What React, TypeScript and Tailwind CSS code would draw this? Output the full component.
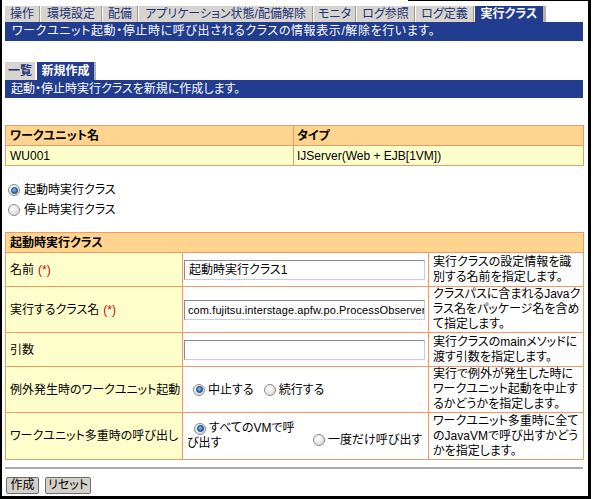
import React from "react";

const FONT =
  "font-['Liberation_Sans','Noto_Sans_CJK_JP',sans-serif] [font-feature-settings:'palt']";

function Radio({ checked }: { checked?: boolean }) {
  return (
    <span className="inline-flex w-[12px] h-[12px] shrink-0 items-center justify-center rounded-full border border-[#8e8e8e] bg-[radial-gradient(circle_at_40%_35%,#ffffff,#cfcfcf)]">
      {checked && (
        <span className="w-[7px] h-[7px] rounded-full border border-[#123a70] bg-[radial-gradient(circle_at_40%_35%,#7cc0ff,#0a52a8)]" />
      )}
    </span>
  );
}

const tabs: { t: string; w: string }[] = [
  { t: "操作", w: "w-[34px]" },
  { t: "環境設定", w: "w-[60px]" },
  { t: "配備", w: "w-[34px]" },
  { t: "アプリケーション状態/配備解除", w: "w-[173px]" },
  { t: "モニタ", w: "w-[41px]" },
  { t: "ログ参照", w: "w-[57px]" },
  { t: "ログ定義", w: "w-[57px]" },
];

function Req() {
  return <span className="text-[#d00000] ml-[4px]">(*)</span>;
}

export default function App() {
  return (
    <div className={`relative w-[593px] h-[499px] bg-white text-[12px] text-black ${FONT}`}>
      <div className="absolute top-0 left-[408px] w-[183px] h-[1px] bg-black" />
      <div className="w-[591px] h-[499px] border-l-2 border-r-[3px] border-b-[3px] border-black pl-[3px] pr-[5px] pt-[6px]">
        {/* top tabs */}
        <div className="flex h-[16px]">
          {tabs.map((tb) => (
            <React.Fragment key={tb.t}>
              <div
                className={`${tb.w} h-[16px] bg-[#d7d4cf] text-[#1d3274] leading-[16px] text-center whitespace-nowrap`}
              >
                {tb.t}
              </div>
              <div className="w-[2px] h-[16px] border-l border-[#9c9892] bg-white" />
            </React.Fragment>
          ))}
          <div className="w-[71px] h-[16px] flex">
            <div className="flex-1 bg-[#223c8f] text-white font-bold leading-[16px] text-center">
              実行クラス
            </div>
            <div className="w-[3px] bg-[#b4b2ae]" />
          </div>
        </div>
        <div className="h-[19px] bg-[#223c8f] text-white leading-[19px] pl-[7px] tracking-[0.6px] whitespace-nowrap">
          ワークユニット起動・停止時に呼び出されるクラスの情報表示/解除を行います。
        </div>

        {/* sub tabs */}
        <div className="flex h-[18px] mt-[21px]">
          <div className="w-[30px] bg-[#d7d4cf] text-[#1d3274] font-bold leading-[18px] text-center">
            一覧
          </div>
          <div className="w-[2px] bg-white" />
          <div className="w-[59px] flex">
            <div className="flex-1 bg-[#223c8f] text-white font-bold leading-[18px] text-center">
              新規作成
            </div>
            <div className="w-[2px] bg-[#b4b2ae]" />
          </div>
        </div>
        <div className="h-[18px] bg-[#223c8f] text-white leading-[18px] pl-[6px] whitespace-nowrap">
          起動・停止時実行クラスを新規に作成します。
        </div>

        {/* work unit table */}
        <table className="mt-[27px] w-[578px] table-fixed border-collapse">
          <colgroup>
            <col className="w-[288px]" />
            <col className="w-[290px]" />
          </colgroup>
          <tbody>
            <tr className="h-[20px] bg-[#ffd48f]">
              <td className="border border-[#f29a66] px-[4px] font-bold">ワークユニット名</td>
              <td className="border border-[#f29a66] px-[3px] font-bold">タイプ</td>
            </tr>
            <tr className="h-[20px] bg-[#ffffcc]">
              <td className="border border-[#f29a66] px-[4px]">WU001</td>
              <td className="border border-[#f29a66] px-[3px]">IJServer(Web + EJB[1VM])</td>
            </tr>
          </tbody>
        </table>

        {/* radios */}
        <div className="mt-[14px] flex flex-col">
          <div className="h-[20px] flex items-center pl-[3px] gap-[4px]">
            <Radio checked />
            <span>起動時実行クラス</span>
          </div>
          <div className="h-[20px] flex items-center pl-[3px] gap-[4px]">
            <Radio />
            <span>停止時実行クラス</span>
          </div>
        </div>

        {/* main table */}
        <table className="mt-[12px] w-[578px] table-fixed border-collapse">
          <colgroup>
            <col className="w-[177px]" />
            <col className="w-[246px]" />
            <col className="w-[155px]" />
          </colgroup>
          <tbody>
            <tr className="h-[20px] bg-[#ffd48f]">
              <td colSpan={3} className="border border-[#f29a66] px-[4px] font-bold">
                起動時実行クラス
              </td>
            </tr>
            <tr className="h-[34px]">
              <td className="border border-[#f29a66] bg-[#ffffcc] px-[4px]">
                名前<Req />
              </td>
              <td className="border border-[#f29a66] pl-[1px]">
                <div className="w-[241px] h-[20px] border border-t-[#8a8a8a] border-l-[#8a8a8a] border-r-[#c8cbe6] border-b-[#c8cbe6] pl-[4px] leading-[18px] whitespace-nowrap overflow-hidden">
                  起動時実行クラス1
                </div>
              </td>
              <td className="border border-[#f29a66] px-[4px] leading-[15px] whitespace-nowrap overflow-hidden">
                実行クラスの設定情報を識
                <br />
                別する名前を指定します。
              </td>
            </tr>
            <tr className="h-[45px]">
              <td className="border border-[#f29a66] bg-[#ffffcc] px-[4px]">
                実行するクラス名<Req />
              </td>
              <td className="border border-[#f29a66] pl-[1px]">
                <div className="w-[241px] h-[20px] border border-t-[#8a8a8a] border-l-[#8a8a8a] border-r-[#c8cbe6] border-b-[#c8cbe6] pl-[3px] text-[11px] tracking-[0.1px] leading-[18px] whitespace-nowrap overflow-hidden">
                  com.fujitsu.interstage.apfw.po.ProcessObserver
                </div>
              </td>
              <td className="border border-[#f29a66] px-[4px] leading-[15px] whitespace-nowrap overflow-hidden">
                クラスパスに含まれるJavaク
                <br />
                ラス名をパッケージ名を含め
                <br />
                て指定します。
              </td>
            </tr>
            <tr className="h-[34px]">
              <td className="border border-[#f29a66] bg-[#ffffcc] px-[4px]">引数</td>
              <td className="border border-[#f29a66] pl-[1px]">
                <div className="w-[241px] h-[20px] border border-t-[#8a8a8a] border-l-[#8a8a8a] border-r-[#c8cbe6] border-b-[#c8cbe6]" />
              </td>
              <td className="border border-[#f29a66] px-[4px] leading-[15px] whitespace-nowrap overflow-hidden">
                実行クラスのmainメソッドに
                <br />
                渡す引数を指定します。
              </td>
            </tr>
            <tr className="h-[45px]">
              <td className="border border-[#f29a66] bg-[#ffffcc] px-[4px] whitespace-nowrap">
                例外発生時のワークユニット起動
              </td>
              <td className="border border-[#f29a66] pl-[10px]">
                <div className="flex items-center">
                  <Radio checked />
                  <span className="ml-[3px]">中止する</span>
                  <span className="ml-[10px] flex items-center">
                    <Radio />
                    <span className="ml-[3px]">続行する</span>
                  </span>
                </div>
              </td>
              <td className="border border-[#f29a66] px-[4px] leading-[15px] whitespace-nowrap overflow-hidden">
                実行で例外が発生した時に
                <br />
                ワークユニット起動を中止す
                <br />
                るかどうかを指定します。
              </td>
            </tr>
            <tr className="h-[47px]">
              <td className="border border-[#f29a66] bg-[#ffffcc] px-[4px] whitespace-nowrap">
                ワークユニット多重時の呼び出し
              </td>
              <td className="border border-[#f29a66] pl-[4px]">
                <div className="flex items-center">
                  <div className="w-[126px] leading-[15px]">
                    <div className="flex items-center">
                      <span className="ml-[7px] mr-[3px] flex items-center">
                        <Radio checked />
                      </span>
                      <span className="whitespace-nowrap">すべてのVMで呼</span>
                    </div>
                    <div>び出す</div>
                  </div>
                  <div className="flex items-center ml-[0px] mt-[7px]">
                    <Radio />
                    <span className="ml-[3px] whitespace-nowrap">一度だけ呼び出す</span>
                  </div>
                </div>
              </td>
              <td className="border border-[#f29a66] px-[4px] leading-[15px] whitespace-nowrap overflow-hidden">
                ワークユニット多重時に全て
                <br />
                のJavaVMで呼び出すかどう
                <br />
                かを指定します。
              </td>
            </tr>
          </tbody>
        </table>

        <div className="mt-[7px] h-[2px] bg-[#a9aaa6]" />

        <div className="mt-[8px] flex gap-[6px] pl-[1px]">
          <button className="h-[17px] w-[33px] rounded-[2px] border border-[#6f6f6f] bg-[#d4d0c8] text-[12px] leading-[15px] text-black">
            作成
          </button>
          <button className="h-[17px] w-[46px] rounded-[2px] border border-[#6f6f6f] bg-[#d4d0c8] text-[12px] leading-[15px] text-black">
            リセット
          </button>
        </div>
      </div>
    </div>
  );
}
